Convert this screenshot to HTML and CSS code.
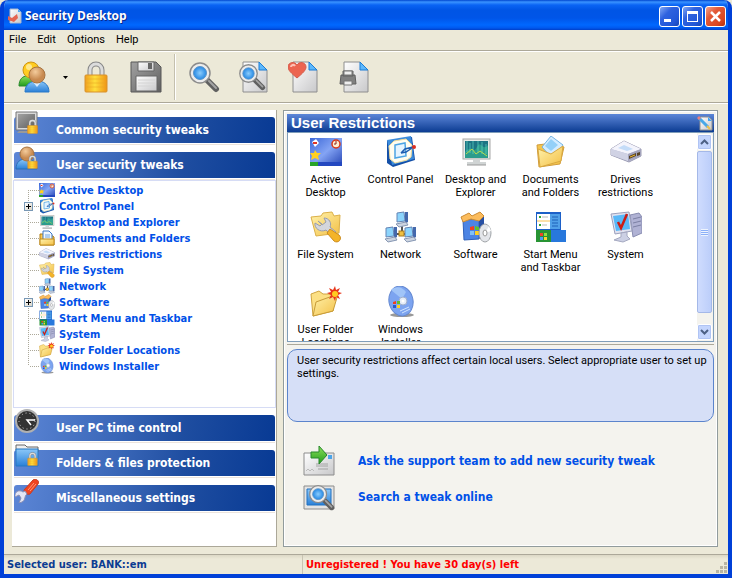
FILE: index.html
```html
<!DOCTYPE html>
<html lang="en">
<head>
    <meta charset="UTF-8">
    <meta name="viewport" content="width=device-width, initial-scale=1.0">
    <title>Security Desktop</title>
    <link rel="stylesheet" href="styles.css">
</head>
<body>
    <!-- shared icons -->
    <svg class="sprite" aria-hidden="true">
        <defs>
            <linearGradient id="gold" x1="0" y1="0" x2="1" y2="0"><stop offset="0" stop-color="#f0a020"/><stop offset=".45" stop-color="#ffdf3c"/><stop offset="1" stop-color="#f09414"/></linearGradient>
            <linearGradient id="paper" x1="0" y1="0" x2="1" y2="1"><stop offset="0" stop-color="#fff"/><stop offset="1" stop-color="#c8c8ca"/></linearGradient>
            <linearGradient id="folder" x1="0" y1="0" x2="1" y2="1"><stop offset="0" stop-color="#fff3ae"/><stop offset="1" stop-color="#f3bf45"/></linearGradient>
            <linearGradient id="blue" x1="0" y1="0" x2="0" y2="1"><stop offset="0" stop-color="#8cc8f8"/><stop offset="1" stop-color="#2a80d8"/></linearGradient>
            <linearGradient id="screen" x1="0" y1="0" x2="1" y2="1"><stop offset="0" stop-color="#3c68d8"/><stop offset=".5" stop-color="#84a4f4"/><stop offset="1" stop-color="#2444b4"/></linearGradient>
            <linearGradient id="steel" x1="0" y1="0" x2="1" y2="1"><stop offset="0" stop-color="#a2a2a2"/><stop offset="1" stop-color="#606060"/></linearGradient>
            <radialGradient id="lens"><stop offset="0" stop-color="#8cccfc"/><stop offset="1" stop-color="#2488e4"/></radialGradient>
            <radialGradient id="skin" cx=".4" cy=".3"><stop offset="0" stop-color="#f4cc9c"/><stop offset="1" stop-color="#c88a50"/></radialGradient>
            <linearGradient id="green" x1="0" y1="0" x2="0" y2="1"><stop offset="0" stop-color="#8ce05c"/><stop offset="1" stop-color="#229c1c"/></linearGradient>
        </defs>
        <symbol id="lock" viewBox="0 0 24 32">
            <path d="M6 14V9a6 6 0 0 1 12 0v5" fill="none" stroke="#888" stroke-width="5"/>
            <path d="M6 14V9a6 6 0 0 1 12 0v5" fill="none" stroke="#dcdcdc" stroke-width="3"/>
            <rect x="1" y="14" width="22" height="17" rx="1" fill="url(#gold)" stroke="#d8922c"/>
            <path d="M2 18h20M2 22h20M2 26h20" stroke="#e8a424" opacity=".5"/>
        </symbol>
        <symbol id="magnifier" viewBox="0 0 32 32">
            <path d="M19 19l9 9" stroke="#606060" stroke-width="6" stroke-linecap="round"/>
            <path d="M21 20l7 7" stroke="#a4a4a4" stroke-width="2" stroke-linecap="round"/>
            <circle cx="12" cy="12" r="10" fill="#ececec" stroke="#8c8c8c" stroke-width="1.5"/>
            <circle cx="12" cy="12" r="6.500" fill="url(#lens)" stroke="#5c94c8"/>
        </symbol>
        <symbol id="page" viewBox="0 0 26 32">
            <path d="M1 1h16l8 8v22H1z" fill="url(#paper)" stroke="#8e8e8e"/>
            <path d="M17 1l8 8h-8z" fill="#5cb8fc" stroke="#1c7cd4"/>
        </symbol>
        <symbol id="active-desktop" viewBox="0 0 32 32">
            <rect y="2" width="32" height="28" fill="url(#screen)"/>
            <rect y="26" width="32" height="4" fill="#2448c0"/><rect y="26" width="8" height="4" fill="#28a428"/>
            <circle cx="26" cy="8" r="4" fill="#fff0d0" stroke="#d83818" stroke-width="1.500"/><path d="M26 5v3h-2" stroke="#822" fill="none"/>
            <path d="M2 6l4-3 3 4-4 4z" fill="#fff"/><path d="M3 6h4v2H3z" fill="#e03828"/>
            <path d="M5 14l2 3 4 0-3 3 1 4-4-2-4 2 1-4-2-3h4z" fill="#ffd020"/>
        </symbol>
        <symbol id="control-panel" viewBox="0 0 32 32">
            <path d="M2 5L27 1l3 23-22 7-6-4z" fill="#1450a8"/>
            <path d="M2 4L26 0l3 23-22 6z" fill="#3c8cdc"/>
            <path d="M9 5l12-2 6 6-1 12-4 3-12 3-5-4-1-13z" fill="#fffdf0" stroke="#f0dc9c"/>
            <path d="M10 9l10-2 1 13-11 2z" fill="#e4f4ff" stroke="#4ca4e4" stroke-width="1.500"/>
            <path d="M16 17l4-4 8-2M16 17l5-1 6-4" fill="none" stroke="#1c5cb0" stroke-width="1.500"/>
            <circle cx="29" cy="11" r="2" fill="#dc3020"/>
        </symbol>
        <symbol id="desktop" viewBox="0 0 32 32">
            <rect x="3" y="3" width="27" height="20" fill="#e8ece8" stroke="#a8a8a8"/>
            <rect x="5" y="5" width="23" height="17" fill="#1c7484"/>
            <path d="M5 16c6-8 8 3 12-5s5 5 11-2v13H5z" fill="#2c9c8c"/>
            <path d="M7 5v11M10 7v10M13 5v13M18 5v12M22 6v12M26 8v10" stroke="#66e4cc" opacity=".6"/>
            <path d="M6 18l6-5 4 5 4-3 7 5" stroke="#b8dc4c" fill="none"/>
            <path d="M13 23h7v3h6v3H7v-3h6z" fill="#d0d4d4"/><path d="M7 29h19" stroke="#999"/>
        </symbol>
        <symbol id="documents" viewBox="0 0 32 32">
            <path d="M2 9l8-1 3 2 16 1-4 17-21 3z" fill="#f4c44c" stroke="#d09c3c"/>
            <path d="M7 11l9-11 12 9-9 15z" fill="#d4ecff" stroke="#74b4e4"/><path d="M16 3l7 6-7 6-6-5z" fill="#94d0f8"/>
            <path d="M3 13l13 5 12-8-2 15-21 6z" fill="url(#folder)" stroke="#d8a840"/>
        </symbol>
        <symbol id="drive" viewBox="0 0 32 32">
            <path d="M1 13L14 5l17 8v7l-12 6L1 19z" fill="#b4b6d0" stroke="#9c9cb4"/>
            <path d="M1 13L14 5l17 8-13 5z" fill="#f4f4fc"/><path d="M1 13l17 5v7L1 19z" fill="#d0d2e4"/><path d="M18 18l13-5v7l-13 5z" fill="#a4a4bc"/>
            <path d="M8 12l6-3 9 4-6 2z" fill="#c4dcf8"/><path d="M19 20l7-3v3l-7 3zM27 17l3-1v3l-3 1z" fill="#584428"/><path d="M20 21l5-2" stroke="#f0b828"/>
        </symbol>
        <symbol id="file-system" viewBox="0 0 32 32">
            <path d="M1 6l10-1 2-3 9-1 2 4 6-1-1 18-23 3z" fill="url(#folder)" stroke="#dcb048"/>
            <path d="M8 10l4 4 4-3-2-4c5 0 8 5 6 9l6 5-4 4-6-6c-6 3-12-2-11-7l5 3 2-2z" fill="#d4d6dc" stroke="#989cac"/>
            <path d="M20 18l9 6c4 4-1 9-5 6l-7-8z" fill="#f4b428" stroke="#cc8c20"/>
        </symbol>
        <symbol id="network" viewBox="0 0 32 32">
            <path d="M17 12v9M8 23h18M17 20v5" stroke="#555" stroke-width="2"/>
            <g id="pc"><path d="M12 2l7-1 1 9-8 1z" fill="#8cd4fc" stroke="#6484b4"/><path d="M20 1h3v10l-3 2z" fill="#4468ac"/><path d="M11 13l10-2 2 3-9 2z" fill="#ccd4e0" stroke="#8898b4"/></g>
            <use href="#pc" x="-11" y="15"/><use href="#pc" x="8" y="15"/>
            <rect x="14" y="20" width="5" height="5" fill="#f0c040" stroke="#a87c20"/>
        </symbol>
        <symbol id="software" viewBox="0 0 32 32">
            <path d="M3 9l16-1v20L4 29z" fill="#4c84e4" stroke="#3060b8"/><path d="M19 8l5-3v18l-5 5z" fill="#2850a4"/>
            <path d="M1 6l8-4 3 3 8-4 4 4-5 5-8-2-8 3z" fill="#fcbc5c" stroke="#cc8c34"/>
            <path d="M10 16l4-1v4h-4z" fill="#f04020"/><path d="M15 15l4 1v3h-4z" fill="#60c030"/><path d="M10 20h4v4h-4z" fill="#80c0f8"/><path d="M15 20h4v4h-4z" fill="#ffd020"/>
            <ellipse cx="25" cy="22" rx="6" ry="9" fill="#e4e6ea" stroke="#a0a4a8"/><path d="M25 22l4-7 2 5z" fill="#fff"/><ellipse cx="25" cy="22" rx="2" ry="3" fill="#fff" stroke="#999"/>
        </symbol>
        <symbol id="start-menu" viewBox="0 0 32 32">
            <rect x="1" y="1" width="25" height="20" fill="#1c60c8"/><rect x="2" y="3" width="13" height="15" fill="#fff"/>
            <path d="M15 3h10v15H15z" fill="#50a0e8"/><path d="M17 6h6M17 9h6M17 12h6M17 15h6" stroke="#1c60b8"/>
            <path d="M4 6h2M4 14h2" stroke="#34a834" stroke-width="2"/><path d="M7 6h6M7 14h5" stroke="#bbb"/><path d="M2 10h13" stroke="#f8c050"/>
            <rect x="16" y="19" width="15" height="12" fill="#2878dc"/><path d="M1 19h15v12H1z" fill="#289434"/>
            <path d="M5 22h3v3H5z" fill="#f04428"/><path d="M9 22h3v3H9z" fill="#90e040"/><path d="M5 26h3v3H5z" fill="#4c9cf8"/><path d="M9 26h3v3H9z" fill="#ffd430"/>
        </symbol>
        <symbol id="system" viewBox="0 0 32 32">
            <path d="M20 4l9-2 3 4v16l-9 4z" fill="#b0b2d4" stroke="#888cb0"/><path d="M23 8l8-2M23 12l8-2M23 16l8-2" stroke="#7c80a4"/>
            <path d="M1 3l18-2 3 19-17 3z" fill="#e0e2f0" stroke="#9ca0bc"/><path d="M3 5l15-2 2 15-14 2z" fill="#58b8f8"/>
            <path d="M8 11l3 6 6-14" fill="none" stroke="#cc1c14" stroke-width="2.500"/>
            <path d="M11 22l6-1v4l3 3-7 3-9-2 7-3z" fill="#ccd0e4" stroke="#a4a8c0"/>
        </symbol>
        <symbol id="user-folder" viewBox="0 0 32 32">
            <path d="M1 8l8-3 4 3 12 0-2 17L3 30z" fill="#fce084" stroke="#d0a440"/>
            <path d="M6 16l22-8-5 17L3 30z" fill="url(#folder)" stroke="#c89c38"/>
            <path d="M25 0l1 4 4-2-2 4 4 1-4 2 2 4-4-2-1 4-2-4-4 2 2-4-4-2 4-1-2-4 4 2z" fill="#e83418"/><circle cx="25" cy="8" r="3" fill="#ffcc20"/>
        </symbol>
        <symbol id="installer" viewBox="0 0 32 32">
            <ellipse cx="17" cy="29" rx="12" ry="2" fill="#999"/>
            <ellipse cx="16" cy="15" rx="12" ry="15" fill="#7ca4f0" stroke="#6488d0" transform="rotate(-12 16 15)"/>
            <path d="M6 4c4-4 11-4 15 2l-4 7z" fill="#a0c4f8"/>
            <circle cx="18" cy="15" r="4" fill="#e4ecf8" stroke="#a0b0cc"/><circle cx="18" cy="15" r="1.500" fill="#fff"/>
            <path d="M8 16l3-1v3H8z" fill="#f04020"/><path d="M12 15h3v3h-3z" fill="#60c030"/><path d="M8 19h3v3H8z" fill="#2858d0"/><path d="M12 19h3v3h-3z" fill="#ffd020"/>
            <path d="M15 25l9-4M17 27l8-4" stroke="#d0e4ff"/>
        </symbol>
    </svg>

    <div class="window">
        <header class="titlebar">
            <svg class="app-icon" viewBox="0 0 16 16"><path d="M3 1h8l3 3v11H3z" fill="url(#paper)" stroke="#a8b8d0"/><path d="M11 1l3 3h-3z" fill="#4ca8f4"/><path d="M1 8l4 2 5-4 1 4-4 4-6-2z" fill="#e46450"/></svg>
            <h1>Security Desktop</h1>
            <button class="win-button" type="button" aria-label="Minimize"><svg viewBox="0 0 19 19"><path d="M4 12h7v3H4z" fill="#fff"/></svg></button>
            <button class="win-button" type="button" aria-label="Maximize"><svg viewBox="0 0 19 19"><path d="M4 4h11v11H4zM5 7v7h9V7z" fill="#fff" fill-rule="evenodd"/></svg></button>
            <button class="win-button close" type="button" aria-label="Close"><svg viewBox="0 0 19 19"><path d="M5 5l9 9M14 5l-9 9" stroke="#fff" stroke-width="2.500"/></svg></button>
        </header>

        <nav class="menubar">
            <a href="#">File</a>
            <a href="#">Edit</a>
            <a href="#">Options</a>
            <a href="#">Help</a>
        </nav>

        <div class="toolbar">
            <button type="button" aria-label="Users"><svg viewBox="0 0 32 32">
                <path d="M1 25c0-7 4-10 8-10s8 3 8 10z" fill="url(#green)" stroke="#28882c"/><circle cx="13" cy="9" r="8" fill="#ffcc20" stroke="#cf9414"/><circle cx="11" cy="6" r="3" fill="#ffe88c"/>
                <path d="M7 31c0-8 6-11 12-11s12 3 12 11z" fill="url(#blue)" stroke="#2878c8"/><path d="M15 21l4 5 4-5" fill="#d8ecff"/><circle cx="19" cy="14" r="8" fill="url(#skin)" stroke="#a87440"/>
            </svg></button>
            <button class="drop" type="button" aria-label="Choose user"><svg viewBox="0 0 5 3"><path d="M0 0h5L2.500 3z"/></svg></button>
            <button type="button" aria-label="Lock"><svg><use href="#lock"/></svg></button>
            <button type="button" aria-label="Save"><svg viewBox="0 0 32 32">
                <path d="M1 1h25l5 5v25H1z" fill="url(#steel)" stroke="#585858"/><path d="M8 1h16v9H8z" fill="url(#paper)" stroke="#666"/><path d="M18 2h4v6h-4z" fill="#666"/><path d="M6 15h21v15H6z" fill="url(#paper)" stroke="#666"/><path d="M8 19h17M8 22h17M8 25h17" stroke="#d4d4d4"/>
            </svg></button>
            <span class="separator"></span>
            <button type="button" aria-label="Search"><svg><use href="#magnifier"/></svg></button>
            <button type="button" aria-label="Preview"><svg viewBox="0 0 32 32"><use href="#page" x="4" width="26" height="32"/><use href="#magnifier" y="2" width="28" height="28"/></svg></button>
            <button type="button" aria-label="Favorites"><svg viewBox="0 0 32 32"><use href="#page" x="4" width="26" height="32"/><path d="M9 17C3 12 0 9 0 6c0-5 7-6 9-2 2-4 9-3 9 2 0 3-3 6-9 11z" fill="#ec6450" stroke="#d45c4c"/><path d="M3 6c0-2 3-3 4-1" fill="none" stroke="#ffc0b4" stroke-width="2"/></svg></button>
            <button type="button" aria-label="Print"><svg viewBox="0 0 32 32"><use href="#page" x="5" width="26" height="32"/><path d="M5 10h10v5H5zM3 14h14l1 9H2z" fill="#808080" stroke="#606060"/><path d="M6 10h8v4H6zM6 20h8v4H6z" fill="#eee" stroke="#777"/></svg></button>
        </div>

        <main class="content">
            <aside class="sidebar">
                <button class="section" type="button"><svg viewBox="0 0 24 24"><path d="M1 1h21v18H1z" fill="#d8d8d8" stroke="#777"/><path d="M3 3h17v14H3z" fill="url(#steel)"/><path d="M4 20h14v2H2z" fill="#999"/><use href="#lock" x="12" y="8" width="11" height="15"/></svg>Common security tweaks</button>
                <button class="section" type="button"><svg viewBox="0 0 24 24"><path d="M1 23c0-7 4-10 10-10s11 3 11 10z" fill="url(#blue)" stroke="#2870b8"/><circle cx="12" cy="8" r="7" fill="url(#skin)" stroke="#a87440"/><use href="#lock" x="12" y="9" width="11" height="14"/></svg>User security tweaks</button>
                <ul class="tree">
                    <li><span class="toggle-space"></span><svg><use href="#active-desktop"/></svg><a href="#">Active Desktop</a></li>
                    <li><button type="button" class="toggle" aria-label="Expand Control Panel"></button><svg><use href="#control-panel"/></svg><a href="#">Control Panel</a></li>
                    <li><span class="toggle-space"></span><svg><use href="#desktop"/></svg><a href="#">Desktop and Explorer</a></li>
                    <li><span class="toggle-space"></span><svg viewBox="0 0 16 16"><path d="M1 4h10l4 3v8H1z" fill="#fcc850" stroke="#b07c14"/><path d="M4 1h6l3 3v7H4z" fill="#f0f8ff" stroke="#3c78c8"/><path d="M6 5h5M6 7h5" stroke="#6ca4e4"/><path d="M1 9h14v6H1z" fill="url(#folder)" stroke="#c08c1c"/></svg><a href="#">Documents and Folders</a></li>
                    <li><span class="toggle-space"></span><svg><use href="#drive"/></svg><a href="#">Drives restrictions</a></li>
                    <li><span class="toggle-space"></span><svg><use href="#file-system"/></svg><a href="#">File System</a></li>
                    <li><span class="toggle-space"></span><svg><use href="#network"/></svg><a href="#">Network</a></li>
                    <li><button type="button" class="toggle" aria-label="Expand Software"></button><svg><use href="#software"/></svg><a href="#">Software</a></li>
                    <li><span class="toggle-space"></span><svg><use href="#start-menu"/></svg><a href="#">Start Menu and Taskbar</a></li>
                    <li><span class="toggle-space"></span><svg><use href="#system"/></svg><a href="#">System</a></li>
                    <li><span class="toggle-space"></span><svg><use href="#user-folder"/></svg><a href="#">User Folder Locations</a></li>
                    <li><span class="toggle-space"></span><svg><use href="#installer"/></svg><a href="#">Windows Installer</a></li>
                </ul>
                <button class="section" type="button"><svg viewBox="0 0 24 24"><circle cx="12" cy="12" r="11" fill="#333" stroke="#b0b0b0" stroke-width="2"/><circle cx="12" cy="12" r="8" fill="none" stroke="#ddd" stroke-dasharray="1 3"/><path d="M20 11h-8l4 5" fill="none" stroke="#fff" stroke-width="1.500"/></svg>User PC time control</button>
                <button class="section" type="button"><svg viewBox="0 0 24 24"><path d="M1 6V1h9l2 2h11v5z" fill="#eee" stroke="#666"/><path d="M1 5h22v17H1z" fill="url(#blue)" stroke="#2478c4"/><use href="#lock" x="12" y="8" width="11" height="14"/></svg>Folders &amp; files protection</button>
                <button class="section" type="button"><svg viewBox="0 0 24 24"><path d="M9 11L18 1c3-2 7 1 5 4l-8 10c-3 1-6-1-6-4z" fill="#f04420" stroke="#c83c20"/><path d="M13 11l6-7M15 12l6-7" stroke="#ff9c7c"/><path d="M10 12l2 3c-3 2-1 6-5 8l-3 1 2-5-2-3-4 2c-1-5 4-8 8-5z" fill="#e4e6f4" stroke="#8c90b4"/></svg>Miscellaneous settings</button>
            </aside>

            <section class="panel">
                <div class="panel-head">
                    <h2>User Restrictions</h2>
                    <svg viewBox="0 0 16 16"><path d="M3 2h9l3 3v10H3z" fill="url(#paper)" stroke="#909090"/><path d="M11 2l4 4h-4z" fill="#48a4f0"/><path d="M2 3l9 9" stroke="#48a8e8" stroke-width="3"/><path d="M1 2l2 2" stroke="#e88080" stroke-width="3"/><path d="M10 11l3 3" stroke="#f0c048" stroke-width="2"/></svg>
                </div>
                <div class="list-box">
                    <ul class="icon-list">
                        <li><a href="#"><svg><use href="#active-desktop"/></svg>Active Desktop</a></li>
                        <li><a href="#"><svg><use href="#control-panel"/></svg>Control Panel</a></li>
                        <li><a href="#"><svg><use href="#desktop"/></svg>Desktop and Explorer</a></li>
                        <li><a href="#"><svg><use href="#documents"/></svg>Documents and Folders</a></li>
                        <li><a href="#"><svg><use href="#drive"/></svg>Drives restrictions</a></li>
                        <li><a href="#"><svg><use href="#file-system"/></svg>File System</a></li>
                        <li><a href="#"><svg><use href="#network"/></svg>Network</a></li>
                        <li><a href="#"><svg><use href="#software"/></svg>Software</a></li>
                        <li><a href="#"><svg><use href="#start-menu"/></svg>Start Menu and Taskbar</a></li>
                        <li><a href="#"><svg><use href="#system"/></svg>System</a></li>
                        <li><a href="#"><svg><use href="#user-folder"/></svg>User Folder Locations</a></li>
                        <li><a href="#"><svg><use href="#installer"/></svg>Windows Installer</a></li>
                    </ul>
                    <div class="scrollbar">
                        <button type="button" aria-label="Scroll up"><svg viewBox="0 0 9 6"><path d="M1 5l3.500-3.500L8 5" fill="none" stroke="#4d6185" stroke-width="2"/></svg></button>
                        <div class="thumb"><span></span></div>
                        <button type="button" aria-label="Scroll down"><svg viewBox="0 0 9 6"><path d="M1 1l3.500 3.500L8 1" fill="none" stroke="#4d6185" stroke-width="2"/></svg></button>
                    </div>
                </div>
                <hr class="splitter">
                <p class="info">User security restrictions affect certain local users. Select appropriate user to set up settings.</p>
                <div class="links">
                    <a href="#"><svg viewBox="0 0 32 32"><path d="M1 8h30v22H1z" fill="url(#paper)" stroke="#8c8c8c"/><path d="M25 10h4v4h-4z" fill="#4ca4e8"/><path d="M13 19h12M13 21h12M15 24h10" stroke="#a4a4a4"/><path d="M3 26l2-2 2 2 2-2 2 2" stroke="#bbb" fill="none"/><path d="M8 7h8V1l8 9-8 9v-6H8z" fill="url(#green)" stroke="#28882c"/></svg>Ask the support team to add new security tweak</a>
                    <a href="#"><svg viewBox="0 0 32 32"><path d="M1 5h30v23H1z" fill="#e4e4e4" stroke="#8c8c8c"/><path d="M4 8h24v16H4z" fill="url(#blue)" stroke="#2070c0"/><use href="#magnifier" x="5" y="3" width="27" height="27"/></svg>Search a tweak online</a>
                </div>
            </section>
        </main>

        <footer class="statusbar">
            <span class="user">Selected user: BANK::em</span>
            <span class="license">Unregistered ! You have 30 day(s) left</span>
            <svg class="grip" viewBox="0 0 12 12"><path d="M8 0h3v3H8zM4 4h3v3H4zM8 4h3v3H8zM0 8h3v3H0zM4 8h3v3H4zM8 8h3v3H8z" fill="#b8b4a2"/></svg>
        </footer>
    </div>
</body>
</html>
```
FILE: styles.css
```css
* {
    box-sizing: border-box;
}
body {
    margin: 0;
    background: #ece9d8;
    font-family: Roboto, sans-serif;
    font-size: 11px;
    line-height: 13px;
    color: #000;
}
ul {
    list-style: none;
    margin: 0;
    padding: 0;
}
a {
    color: inherit;
    text-decoration: none;
}
button {
    font: inherit;
    padding: 0;
    border: 0;
    background: none;
}
svg {
    display: block;
    flex: none;
}
.sprite {
    position: absolute;
    width: 0;
    height: 0;
}
.section,
.tree,
.links,
.statusbar {
    font-family: "DejaVu Sans Condensed", sans-serif;
    font-weight: bold;
}
.window {
    display: flex;
    flex-direction: column;
    height: 100vh;
    border: solid #0040d8;
    border-width: 0 4px 4px;
    border-radius: 8px 8px 0 0;
    background: #ece9d8;
    overflow: hidden;
}

/* title bar */
.titlebar {
    display: flex;
    align-items: center;
    gap: 2px;
    height: 30px;
    margin: 0 -4px;
    padding: 2px 6px 0 7px;
    background: linear-gradient(#0046d0, #3a93ff 2px, #0a64f4 5px, #0055e5 10px, #0055e8 18px, #0068ff 25px, #0058ee 28px, #003fc8);
}
.titlebar h1 {
    flex: 1;
    margin: 0;
    font-family: "Open Sans", sans-serif;
    font-size: 12px;
    line-height: 18px;
    color: #fff;
    text-shadow: 1px 1px #0a2a8c;
}
.app-icon {
    width: 16px;
    height: 16px;
}
.win-button {
    width: 21px;
    height: 21px;
    border: 1px solid #fff;
    border-radius: 3px;
    background: linear-gradient(135deg, #83a8f4, #2f62df 35%, #2257d8 75%, #1744b4);
}
.win-button.close {
    background: linear-gradient(135deg, #f4a48c, #e35a38 35%, #dd4720 75%, #b0300e);
}

/* menu and toolbar */
.menubar {
    display: flex;
    gap: 11px;
    height: 21px;
    padding: 3px 5px;
    border-bottom: 1px solid #aca899;
}
.toolbar {
    display: flex;
    align-items: center;
    height: 52px;
    padding-left: 5px;
    border-top: 1px solid #fff;
    border-bottom: 1px solid #aca899;
    box-shadow: 0 1px #fff;
}
.toolbar button {
    display: flex;
    justify-content: center;
    width: 50px;
}
.toolbar svg {
    width: 32px;
    height: 32px;
}
.toolbar .drop {
    width: 12px;
}
.toolbar .drop svg {
    width: 5px;
    height: 3px;
}
.separator {
    width: 2px;
    height: 46px;
    margin: 0 3px;
    border-left: 1px solid #c4c0ae;
    border-right: 1px solid #fff;
}

/* left side */
.content {
    display: flex;
    flex: 1;
    gap: 6px;
    min-height: 0;
    padding: 7px 10px 7px 8px;
}
.sidebar {
    flex: 0 0 265px;
    padding-top: 7px;
    background: #fff;
    border: solid #aca899;
    border-width: 0 1px 1px 0;
}
.section {
    position: relative;
    display: block;
    width: 261px;
    height: 26px;
    margin: 0 0 9px 2px;
    padding-left: 42px;
    border-radius: 3px 3px 0 0;
    background: linear-gradient(100deg, #5c86d6, #3a67b8 40%, #1e4da0 65%, #083a94);
    box-shadow: 0 1px #fff, 0 2px #ece4dc;
    color: #fff;
    font-size: 12px;
    text-align: left;
}
.section svg {
    position: absolute;
    top: -6px;
    left: 1px;
    width: 24px;
    height: 24px;
}
.tree {
    height: 228px;
    margin: -7px 0 7px 1px;
    padding-top: 1px;
    border: 1px solid #d6dcf5;
    color: #0050e8;
}
.tree li {
    display: flex;
    align-items: center;
    height: 16px;
    padding-left: 10px;
    background:
        repeating-linear-gradient(#aca899 0 1px, transparent 1px 2px) 14px 0 / 1px 16px no-repeat,
        repeating-linear-gradient(90deg, #aca899 0 1px, transparent 1px 2px) 16px 8px / 9px 1px no-repeat;
}
.tree li:first-child {
    background-position: 14px 8px, 16px 8px;
}
.tree li:last-child {
    background-size: 1px 8px, 9px 1px;
}
.tree svg {
    width: 16px;
    height: 16px;
    margin-right: 4px;
}
.toggle,
.toggle-space {
    width: 9px;
    height: 9px;
    margin-right: 6px;
}
.toggle {
    border: 1px solid #7898b5;
    background:
        linear-gradient(#000, #000) center / 5px 1px no-repeat,
        linear-gradient(#000, #000) center / 1px 5px no-repeat,
        linear-gradient(135deg, #fff, #d8d4c8);
}

/* right side */
.panel {
    display: flex;
    flex: 1;
    flex-direction: column;
    min-width: 0;
    padding: 3px;
    border: 1px solid #919b9c;
    box-shadow: inset 0 0 0 1px #fff;
    background: #f4f3ee;
}
.panel-head {
    display: flex;
    align-items: center;
    justify-content: space-between;
    height: 18px;
    padding: 0 1px 0 4px;
    background: linear-gradient(#5c86d8, #0c3c92);
    color: #fff;
}
.panel-head h2 {
    margin: 0;
    font-family: "Liberation Sans", sans-serif;
    font-size: 15px;
    line-height: 18px;
}
.panel-head svg {
    width: 16px;
    height: 16px;
}
.list-box {
    display: flex;
    flex: 1;
    min-height: 0;
    border: 1px solid #7f9db9;
    background: #fff;
    overflow: hidden;
}
.icon-list {
    display: grid;
    flex: 1;
    grid-template-columns: repeat(auto-fill, 75px);
    grid-auto-rows: 75px;
    padding-top: 3px;
    text-align: center;
}
.icon-list li {
    padding: 0 4px;
}
.icon-list svg {
    width: 32px;
    height: 32px;
    margin: 0 auto 5px;
}
.scrollbar {
    display: flex;
    flex-direction: column;
    gap: 1px;
    width: 16px;
    padding: 1px 1px 1px 0;
    background: #f4f3ee;
}
.scrollbar button {
    display: flex;
    align-items: center;
    justify-content: center;
    height: 16px;
    border: 1px solid #fff;
    border-radius: 2px;
    background: #c4d5fd;
    box-shadow: inset 0 0 0 1px #b0c4f4;
}
.scrollbar svg {
    width: 9px;
    height: 6px;
}
.thumb {
    display: flex;
    flex: 1;
    align-items: center;
    justify-content: center;
    margin-bottom: 10px;
    border: 1px solid #a4b8e8;
    border-radius: 2px;
    background: linear-gradient(90deg, #cfdcfe, #bccefa);
}
.thumb span {
    width: 7px;
    height: 7px;
    background: repeating-linear-gradient(#eef4fe 0 1px, #8cb0f8 1px 2px);
}
.splitter {
    width: 100%;
    height: 1px;
    margin: 2px 0 4px;
    border: 0;
    background: #aca899;
}
.info {
    min-height: 73px;
    margin: 0;
    padding: 4px 3px 4px 9px;
    border: 1px solid #5b84cc;
    border-radius: 10px;
    background: #d6dff7;
}
.links {
    display: flex;
    flex-direction: column;
    gap: 4px;
    padding: 23px 16px 30px;
    color: #0050e8;
    font-size: 12px;
}
.links a {
    display: flex;
    align-items: center;
    gap: 23px;
}
.links svg {
    width: 32px;
    height: 32px;
}

/* status bar */
.statusbar {
    display: flex;
    height: 20px;
    border-top: 1px solid #aca899;
    background: linear-gradient(#dcd8c6, #ece9d8 4px);
    line-height: 20px;
}
.user {
    flex: 0 0 299px;
    padding-left: 3px;
    border-right: 1px solid #c8c4b2;
    color: #0c3c92;
}
.license {
    flex: 1;
    padding-left: 3px;
    color: #f00;
}
.grip {
    align-self: flex-end;
    width: 12px;
    height: 12px;
}
```
